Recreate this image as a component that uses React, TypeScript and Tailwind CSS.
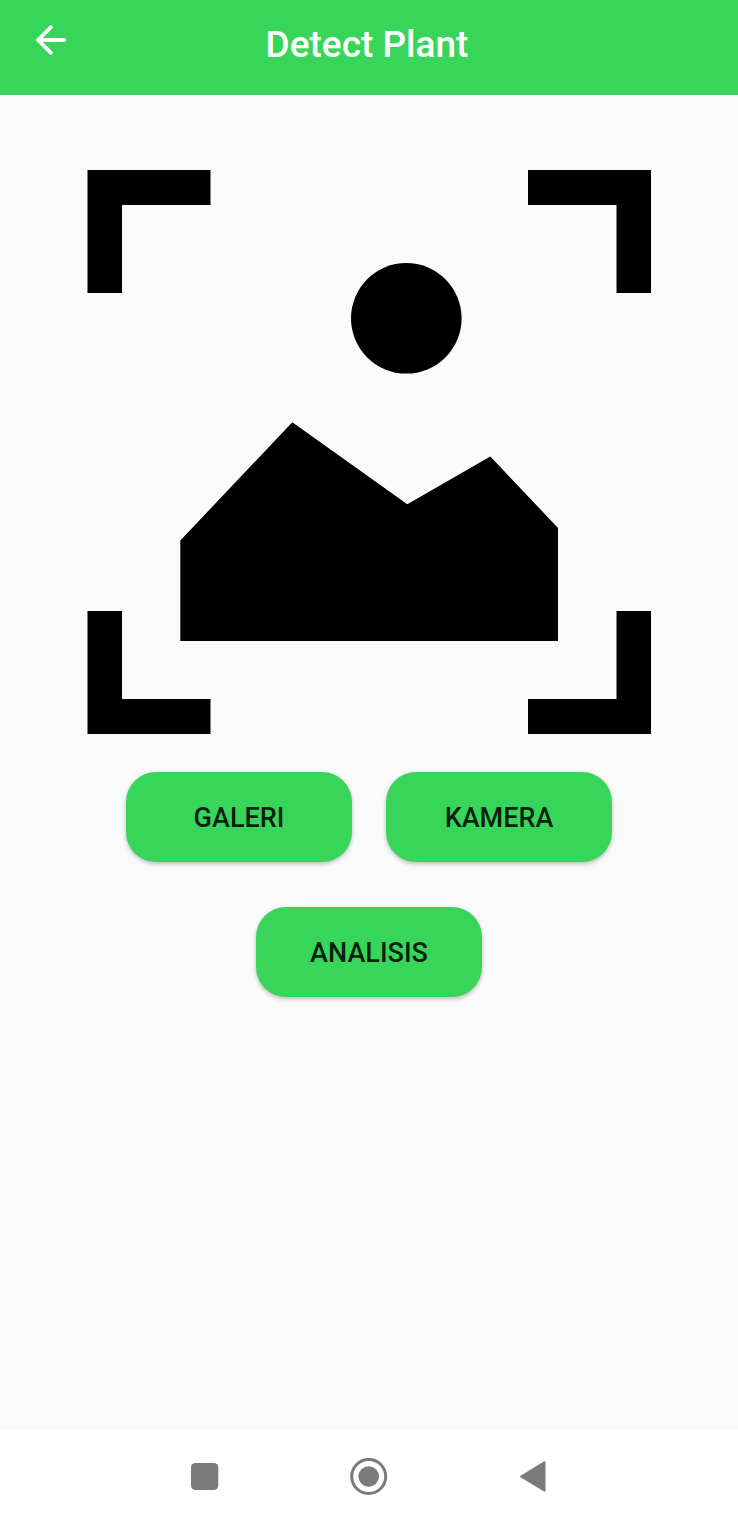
import type { ReactNode } from "react";

function ActionButton({ children }: { children: ReactNode }) {
  return (
    <button
      type="button"
      className="flex h-[90px] w-[226px] items-center justify-center rounded-[30px] bg-[#37d65a] pt-0.5 text-[27px] leading-8 font-medium text-black/87 shadow-[0_2px_4px_rgba(0,0,0,0.25)]"
    >
      {children}
    </button>
  );
}

function Header() {
  return (
    <header className="grid h-[95px] grid-cols-[1fr_auto_1fr] items-start border-b border-[#4cc768] bg-[#37d65a] pt-5 pr-9 pl-8 text-white">
      <button type="button" aria-label="Back" className="flex size-10 items-center">
        <svg
          viewBox="0 0 40 40"
          className="size-10"
          fill="none"
          stroke="currentColor"
          strokeWidth="3.800"
          strokeLinecap="round"
        >
          <path d="M32.200 20H7" />
          <path d="M18.900 7.100L6.200 20L18.900 32.900" />
        </svg>
      </button>
      <h1 className="text-[37px] leading-[50px] font-medium">Detect Plant</h1>
    </header>
  );
}

function ScanFrame() {
  return (
    <svg viewBox="0 0 564 564" className="w-full max-w-[564px]" role="img" aria-label="Plant photo" fill="#000">
      <path d="M0.500 0H123.500V35H35V123H0.500Z" />
      <path d="M441 0H564V123H529.500V35H441Z" />
      <path d="M0.500 441H35V529H123.500V564H0.500Z" />
      <path d="M529.500 441H564V564H441V529H529.500Z" />
      <circle cx="319.300" cy="148.300" r="55.300" />
      <path d="M93.300 370.500L205.300 252.300L320.300 334.300L403.300 286.500L471 358V471H93.300Z" />
    </svg>
  );
}

function NavigationBar() {
  return (
    <nav className="flex h-[90px] items-center justify-center gap-[124px] bg-white text-[#7a7a7a]">
      <button type="button" aria-label="Recent apps" className="size-10">
        <svg viewBox="0 0 40 40" className="size-10" fill="currentColor">
          <rect x="6" y="7" width="27.300" height="27" rx="4.500" />
        </svg>
      </button>
      <button type="button" aria-label="Home" className="size-10">
        <svg viewBox="0 0 40 40" className="size-10" fill="currentColor">
          <circle cx="19.700" cy="20.500" r="17" fill="none" stroke="currentColor" strokeWidth="3" />
          <circle cx="19.700" cy="20.500" r="10.300" />
        </svg>
      </button>
      <button type="button" aria-label="Navigate back" className="size-10">
        <svg
          viewBox="0 0 40 40"
          className="size-10"
          fill="currentColor"
          stroke="currentColor"
          strokeWidth="2"
          strokeLinejoin="round"
        >
          <path d="M8 20.500L31.500 6.300V34.700Z" />
        </svg>
      </button>
    </nav>
  );
}

export default function App() {
  return (
    <div className="flex min-h-screen flex-col bg-[#fafafa] font-[Roboto,sans-serif]">
      <Header />
      <main className="flex flex-1 flex-col items-center px-8 pt-[75px] pb-12">
        <ScanFrame />
        <div className="mt-[38px] flex flex-wrap justify-center gap-x-[34px] gap-y-[45px]">
          <ActionButton>GALERI</ActionButton>
          <ActionButton>KAMERA</ActionButton>
        </div>
        <div className="mt-[45px]">
          <ActionButton>ANALISIS</ActionButton>
        </div>
      </main>
      <NavigationBar />
    </div>
  );
}
